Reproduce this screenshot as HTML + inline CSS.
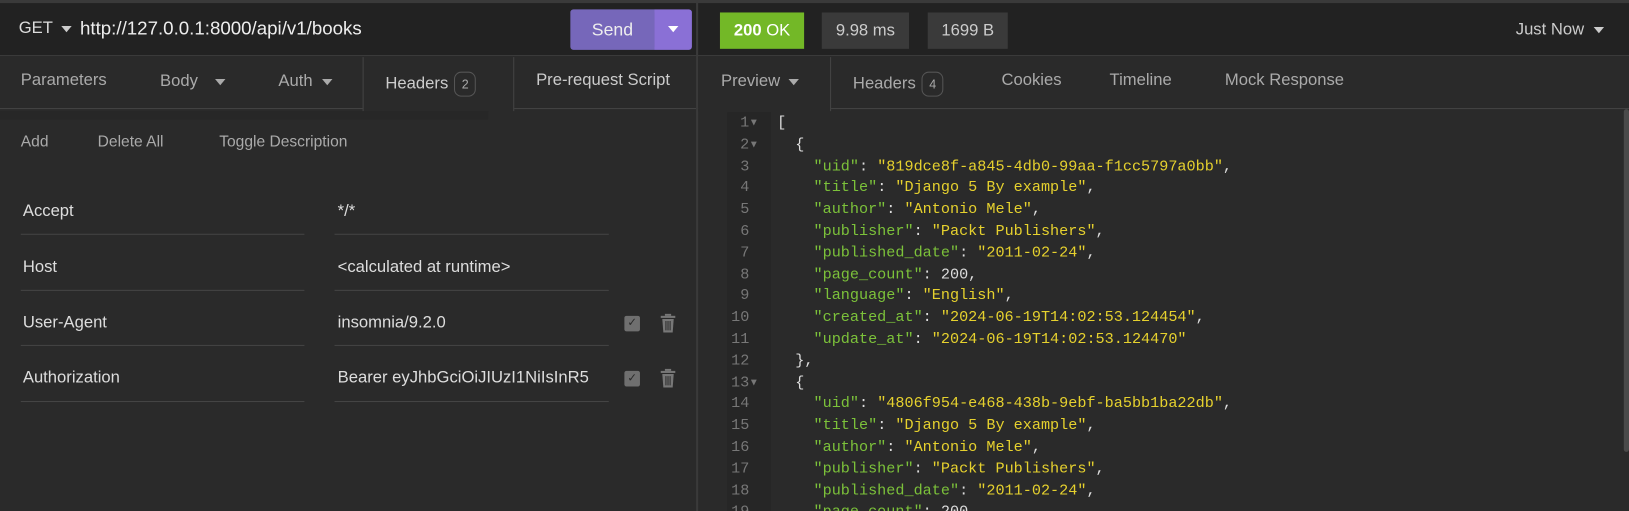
<!DOCTYPE html>
<html><head><style>
*{margin:0;padding:0;box-sizing:border-box}
body{width:1629px;height:511px;background:#2a2a2a;overflow:hidden}
#w{position:absolute;left:0;top:0;width:1568px;height:492px;transform:scale(1.0389);transform-origin:0 0;font-family:"Liberation Sans",sans-serif;color:#ddd;font-size:16px;background:#2a2a2a;overflow:hidden}
.a{position:absolute;white-space:nowrap}
.top{position:absolute;left:0;top:0;width:1568px;height:54px;background:#222;border-top:3px solid #3a3a3a;border-bottom:1px solid #3c3c3c}
.tabs{position:absolute;top:55px;height:50px;background:#2a2a2a}
.tri{display:inline-block;width:0;height:0;border-left:5px solid transparent;border-right:5px solid transparent;border-top:6px solid #ccc;vertical-align:middle}
.badge{display:inline-block;border:1px solid #555;border-radius:7px;font-size:12px;padding:4px 6px;margin-left:6px;color:#aaa;vertical-align:middle}
.line{position:absolute;height:1px;background:#444}
.code{position:absolute;left:742px;top:108px;width:820px;height:403px;font-family:"Liberation Mono",monospace;font-size:14.6px;line-height:20.8px;color:#ddd}
.gut{position:absolute;left:700px;top:108px;width:42px;height:403px;background:#262626;font-family:"Liberation Mono",monospace;font-size:14.6px;line-height:20.8px;color:#777;text-align:right;padding-right:12px}
.k{color:#7cc23a}.s{color:#e6d12e}
.cb{position:absolute;width:15px;height:15px;background:#6f6f6f;border-radius:2px;color:#2a2a2a;font-size:11px;text-align:center;line-height:15px}
</style></head><body><div id="w">
<div class="top"></div>
<div class="a" style="left:18px;top:19px;font-size:16px;color:#ddd">GET <span class="tri" style="margin-left:4px"></span></div>
<div class="a" style="left:77px;top:17px;font-size:18px;color:#eee">http://127.0.0.1:8000/api/v1/books</div>
<div class="a" style="left:549px;top:9px;width:81px;height:39px;background:#7667ba;border-radius:3px 0 0 3px;text-align:center;line-height:39px;font-size:17px;color:#eee">Send</div>
<div class="a" style="left:630px;top:9px;width:36px;height:39px;background:#8a70d6;border-radius:0 3px 3px 0;text-align:center;line-height:37px"><span class="tri" style="border-top-color:#fff"></span></div>
<div class="a" style="left:670px;top:0;width:2px;height:511px;background:#3a3a3a"></div>
<div class="a" style="left:693px;top:12px;width:81px;height:35px;background:#73b827;color:#fff;font-size:16px;line-height:35px;text-align:center"><b>200</b> OK</div>
<div class="a" style="left:791px;top:12px;width:84px;height:35px;background:#3a3a3a;color:#ccc;font-size:16px;line-height:35px;text-align:center">9.98 ms</div>
<div class="a" style="left:893px;top:12px;width:77px;height:35px;background:#3a3a3a;color:#ccc;font-size:16px;line-height:35px;text-align:center">1699 B</div>
<div class="a" style="left:1459px;top:20px;font-size:16px;color:#ccc">Just Now <span class="tri" style="margin-left:5px"></span></div>
<div class="tabs" style="left:0;width:670px;border-bottom:1px solid #444"></div>
<div class="a" style="left:349px;top:55px;width:146px;height:52px;background:#2a2a2a;border-left:1px solid #444;border-right:1px solid #444"></div>
<div class="a" style="left:20px;top:69px;font-size:16px;color:#aaa">Parameters</div>
<div class="a" style="left:154px;top:70px;font-size:16px;color:#aaa">Body <span class="tri" style="margin-left:12px;border-top-color:#aaa"></span></div>
<div class="a" style="left:268px;top:70px;font-size:16px;color:#aaa">Auth <span class="tri" style="margin-left:5px;border-top-color:#aaa"></span></div>
<div class="a" style="left:371px;top:69px;font-size:16px;color:#ccc">Headers<span class="badge">2</span></div>
<div class="a" style="left:516px;top:69px;font-size:16px;color:#ccc">Pre-request Script</div>
<div class="a" style="left:20px;top:128px;font-size:15px;color:#aaa">Add</div>
<div class="a" style="left:94px;top:128px;font-size:15px;color:#aaa">Delete All</div>
<div class="a" style="left:211px;top:128px;font-size:15px;color:#aaa">Toggle Description</div>
<div class="a" style="left:0;top:107px;width:470px;height:8px;background:#272727"></div>
<div class="a" style="left:22px;top:195px;font-size:16px;color:#ddd">Accept</div>
<div class="a" style="left:325px;top:195px;font-size:16px;color:#ddd">*/*</div>
<div class="line" style="left:20px;top:225px;width:273px"></div><div class="line" style="left:322px;top:225px;width:264px"></div>
<div class="a" style="left:22px;top:249px;font-size:16px;color:#ddd">Host</div>
<div class="a" style="left:325px;top:249px;font-size:16px;color:#ddd">&lt;calculated at runtime&gt;</div>
<div class="line" style="left:20px;top:279px;width:273px"></div><div class="line" style="left:322px;top:279px;width:264px"></div>
<div class="a" style="left:22px;top:302px;font-size:16px;color:#ddd">User-Agent</div>
<div class="a" style="left:325px;top:302px;font-size:16px;color:#ddd">insomnia/9.2.0</div>
<div class="line" style="left:20px;top:332px;width:273px"></div><div class="line" style="left:322px;top:332px;width:264px"></div>
<div class="a" style="left:22px;top:355px;font-size:16px;color:#ddd">Authorization</div>
<div class="a" style="left:325px;top:355px;font-size:16px;color:#ddd;width:262px;overflow:hidden">Bearer eyJhbGciOiJIUzI1NiIsInR5</div>
<div class="line" style="left:20px;top:386px;width:273px"></div><div class="line" style="left:322px;top:386px;width:264px"></div>
<div class="cb" style="left:601px;top:304px">✓</div>
<div class="cb" style="left:601px;top:357px">✓</div>
<svg class="a" style="left:635px;top:302px" width="16" height="18" viewBox="0 0 16 18"><rect x="1" y="2" width="14" height="2" fill="#777"/><rect x="5" y="0" width="6" height="2" fill="#777"/><path d="M2.5 5h11l-1 13h-9z" fill="#777"/><path d="M6 7v9M8 7v9M10 7v9" stroke="#2a2a2a" stroke-width="1"/></svg>
<svg class="a" style="left:635px;top:355px" width="16" height="18" viewBox="0 0 16 18"><rect x="1" y="2" width="14" height="2" fill="#777"/><rect x="5" y="0" width="6" height="2" fill="#777"/><path d="M2.5 5h11l-1 13h-9z" fill="#777"/><path d="M6 7v9M8 7v9M10 7v9" stroke="#2a2a2a" stroke-width="1"/></svg>
<div class="tabs" style="left:672px;width:957px;border-bottom:1px solid #444"></div>
<div class="a" style="left:672px;top:55px;width:128px;height:52px;background:#2a2a2a;border-right:1px solid #444"></div>
<div class="a" style="left:694px;top:70px;font-size:16px;color:#aaa">Preview <span class="tri" style="margin-left:4px;border-top-color:#aaa"></span></div>
<div class="a" style="left:821px;top:69px;font-size:16px;color:#aaa">Headers<span class="badge">4</span></div>
<div class="a" style="left:964px;top:69px;font-size:16px;color:#aaa">Cookies</div>
<div class="a" style="left:1068px;top:69px;font-size:16px;color:#aaa">Timeline</div>
<div class="a" style="left:1179px;top:69px;font-size:16px;color:#aaa">Mock Response</div>
<div class="gut"><div style="position:relative;top:1px">1▾<br>2▾<br>3&nbsp;<br>4&nbsp;<br>5&nbsp;<br>6&nbsp;<br>7&nbsp;<br>8&nbsp;<br>9&nbsp;<br>10&nbsp;<br>11&nbsp;<br>12&nbsp;<br>13▾<br>14&nbsp;<br>15&nbsp;<br>16&nbsp;<br>17&nbsp;<br>18&nbsp;<br>19&nbsp;</div></div>
<div class="code"><pre style="font:inherit;padding-left:6px;position:relative;top:1px">[
  {
    <span class="k">"uid"</span>: <span class="s">"819dce8f-a845-4db0-99aa-f1cc5797a0bb"</span>,
    <span class="k">"title"</span>: <span class="s">"Django 5 By example"</span>,
    <span class="k">"author"</span>: <span class="s">"Antonio Mele"</span>,
    <span class="k">"publisher"</span>: <span class="s">"Packt Publishers"</span>,
    <span class="k">"published_date"</span>: <span class="s">"2011-02-24"</span>,
    <span class="k">"page_count"</span>: 200,
    <span class="k">"language"</span>: <span class="s">"English"</span>,
    <span class="k">"created_at"</span>: <span class="s">"2024-06-19T14:02:53.124454"</span>,
    <span class="k">"update_at"</span>: <span class="s">"2024-06-19T14:02:53.124470"</span>
  },
  {
    <span class="k">"uid"</span>: <span class="s">"4806f954-e468-438b-9ebf-ba5bb1ba22db"</span>,
    <span class="k">"title"</span>: <span class="s">"Django 5 By example"</span>,
    <span class="k">"author"</span>: <span class="s">"Antonio Mele"</span>,
    <span class="k">"publisher"</span>: <span class="s">"Packt Publishers"</span>,
    <span class="k">"published_date"</span>: <span class="s">"2011-02-24"</span>,
    <span class="k">"page_count"</span>: 200,</pre></div>
<div class="a" style="left:1563px;top:105px;width:5px;height:330px;background:#4a4a4a;border-radius:3px"></div>
</div></body></html>
